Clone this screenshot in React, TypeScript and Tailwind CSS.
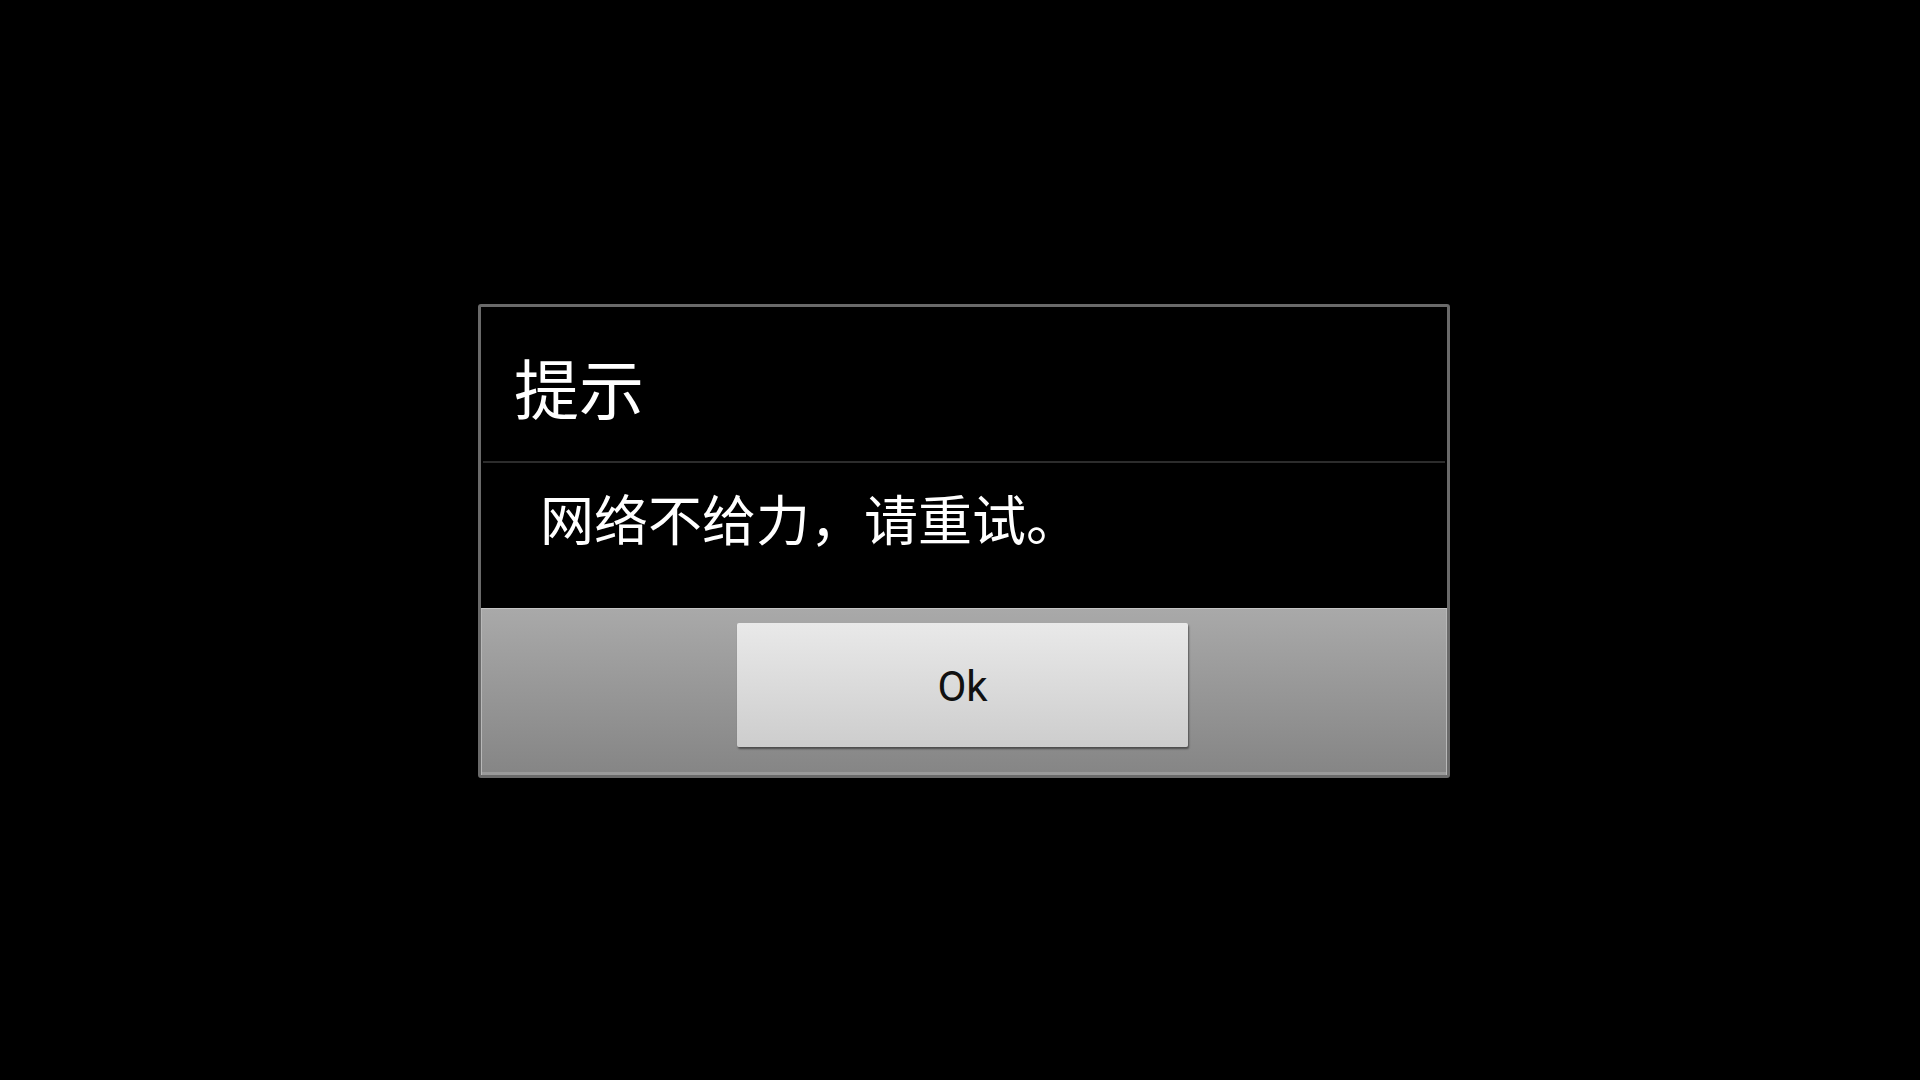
export default function App() {
  return (
    <div className="flex h-screen w-full items-center justify-center bg-black pl-[8px] pt-[1px]">
      <div
        className="flex h-[474px] w-[972px] flex-col overflow-hidden rounded-[3px] border-[3px] border-[#6a6a6a] bg-black"
        style={{ fontFamily: '"Noto Sans CJK SC", Roboto, sans-serif' }}
      >
        <div className="flex h-[154px] items-center pl-[33px] pt-[6px]">
          <span className="text-[65px] leading-none text-white">提示</span>
        </div>
        <div className="mx-[2px] h-[2px] bg-[#2c2c2c]" />
        <div className="flex h-[145px] items-start pl-[59px] pt-[28px]">
          <span className="text-[54px] leading-none text-white">网络不给力，请重试。</span>
        </div>
        <div className="flex flex-1 justify-center border-t border-[#c4c4c4] bg-gradient-to-b from-[#a9a9a9] to-[#858585] pt-[14px] shadow-[inset_1px_0_0_#b8b8b8,inset_-1px_0_0_#b8b8b8,inset_0_-3px_0_#9a9a9a]">
          <button
            className="mr-[3px] flex h-[124px] w-[451px] items-center justify-center rounded-[2px] bg-gradient-to-b from-[#e9e9e9] to-[#cdcdcd] pt-[4px] shadow-[1px_2px_2px_rgba(0,0,0,0.45)]"
            style={{ fontFamily: 'Roboto, "Noto Sans", sans-serif' }}
          >
            <span className="text-[42px] leading-none text-[#111]">Ok</span>
          </button>
        </div>
      </div>
    </div>
  );
}
